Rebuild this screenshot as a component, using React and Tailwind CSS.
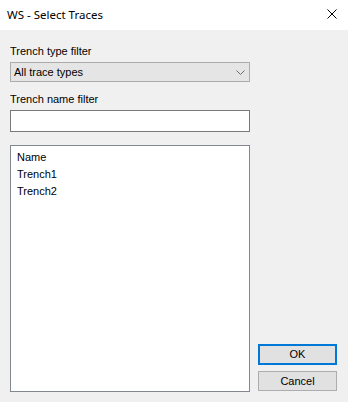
import React from "react";

const App = () => {
  return (
    <div className="w-[348px] h-[402px] bg-[#f0f0f0] flex flex-col text-[11px] text-black font-['Liberation_Sans','Arial',sans-serif] overflow-hidden">
      {/* Title bar */}
      <div className="h-[30px] bg-white flex items-center justify-between pl-[7px] pr-[11px]">
        <span className="text-[11.5px] font-['Noto_Sans',sans-serif]">WS - Select Traces</span>
        <svg width="10" height="10" viewBox="0 0 10 10" className="mb-[2px]">
          <path d="M0.5 0.5 L9.5 9.5 M9.5 0.5 L0.5 9.5" stroke="#000" strokeWidth="1" />
        </svg>
      </div>

      <div className="flex flex-1 pl-[10px] pr-[11px] pt-[13px] pb-[10px] gap-[8px]">
        {/* Left column */}
        <div className="w-[240px] flex flex-col">
          <label className="leading-[16px]">Trench type filter</label>
          <div className="mt-[3px] h-[20px] bg-[#e5e5e5] border border-[#acacac] flex items-center justify-between pl-[3px] pr-[4px]">
            <span>All trace types</span>
            <svg width="9" height="5" viewBox="0 0 9 5">
              <path d="M0.5 0.5 L4.5 4.5 L8.5 0.5" stroke="#6d6d6d" strokeWidth="1" fill="none" />
            </svg>
          </div>
          <label className="mt-[9px] leading-[16px]">Trench name filter</label>
          <div className="mt-[3px] h-[22px] bg-white border border-[#7a7a7a]" />
          <div className="mt-[13px] flex-1 bg-white border border-[#828790] pt-[3px] pl-[6px] leading-[17px]">
            <div>Name</div>
            <div>Trench1</div>
            <div>Trench2</div>
          </div>
        </div>

        {/* Buttons */}
        <div className="flex-1 flex flex-col justify-end gap-[6px] pb-[1px]">
          <button className="h-[21px] bg-[#e1e1e1] border-2 border-[#0078d7] flex items-center justify-center">
            OK
          </button>
          <button className="h-[20px] bg-[#e1e1e1] border border-[#adadad] flex items-center justify-center">
            Cancel
          </button>
        </div>
      </div>
    </div>
  );
};

export default App;
